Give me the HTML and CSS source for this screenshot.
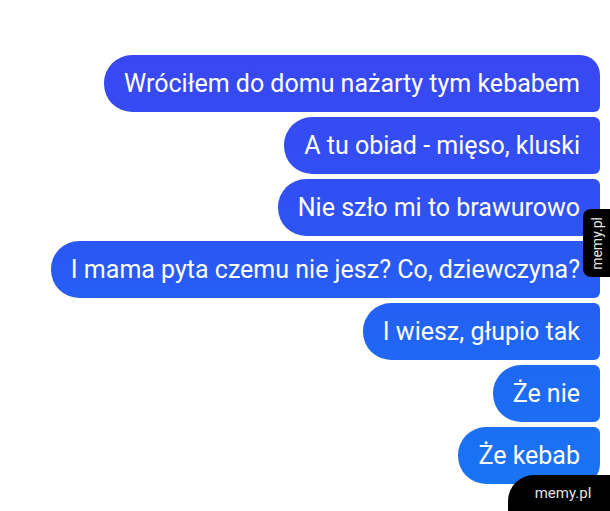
FILE: index.html
```html
<!DOCTYPE html>
<html lang="pl">
<head>
    <meta charset="UTF-8">
    <meta name="viewport" content="width=device-width, initial-scale=1.0">
    <title>memy.pl</title>
    <link rel="stylesheet" href="styles.css">
</head>
<body>

    <!-- Conversation -->
    <div class="chat">
        <div class="bubble">Wróciłem do domu nażarty tym kebabem</div>
        <div class="bubble">A tu obiad - mięso, kluski</div>
        <div class="bubble">Nie szło mi to brawurowo</div>
        <div class="bubble">I mama pyta czemu nie jesz? Co, dziewczyna?</div>
        <div class="bubble">I wiesz, głupio tak</div>
        <div class="bubble">Że nie</div>
        <div class="bubble">Że kebab</div>
    </div>

    <!-- Watermarks -->
    <div class="side-mark">memy.pl</div>
    <div class="corner-mark">memy.pl</div>

</body>
</html>
```

FILE: styles.css
```css
/* General Styling */
body {
    margin: 0;
    background-color: #ffffff;
    font-family: Roboto, "Open Sans", sans-serif;
    overflow: hidden;
}
.chat {
    display: flex;
    flex-direction: column;
    align-items: flex-end;
    gap: 5px;
    padding: 55px 10px 0 0;
}
/* Bubbles */
.bubble {
    height: 57px;
    display: flex;
    align-items: center;
    padding: 0 20px 0 20px;
    border-radius: 28px 6px 6px 28px;
    background: linear-gradient(180deg, #3d44f1 0px, #3050f3 200px, #1f68f4 360px, #1876f3 500px);
    background-attachment: fixed;
    color: #ffffff;
    font-size: 25px;
    white-space: nowrap;
}
.bubble:first-child {
    border-top-right-radius: 20px;
}
.bubble:last-child {
    border-bottom-right-radius: 20px;
}
/* Watermarks */
.side-mark {
    position: absolute;
    top: 209px;
    right: 0;
    width: 27px;
    height: 68px;
    background-color: #000000;
    border-radius: 8px 0 0 8px;
    color: #e6e6e6;
    font-size: 14px;
    writing-mode: sideways-lr;
    display: flex;
    align-items: center;
    justify-content: center;
}
.corner-mark {
    position: absolute;
    right: 0;
    bottom: 0;
    width: 102px;
    height: 36px;
    background-color: #000000;
    border-top-left-radius: 26px;
    color: #e0e0e0;
    font-size: 15px;
    display: flex;
    align-items: center;
    justify-content: center;
    padding-left: 8px;
    box-sizing: border-box;
}
```
